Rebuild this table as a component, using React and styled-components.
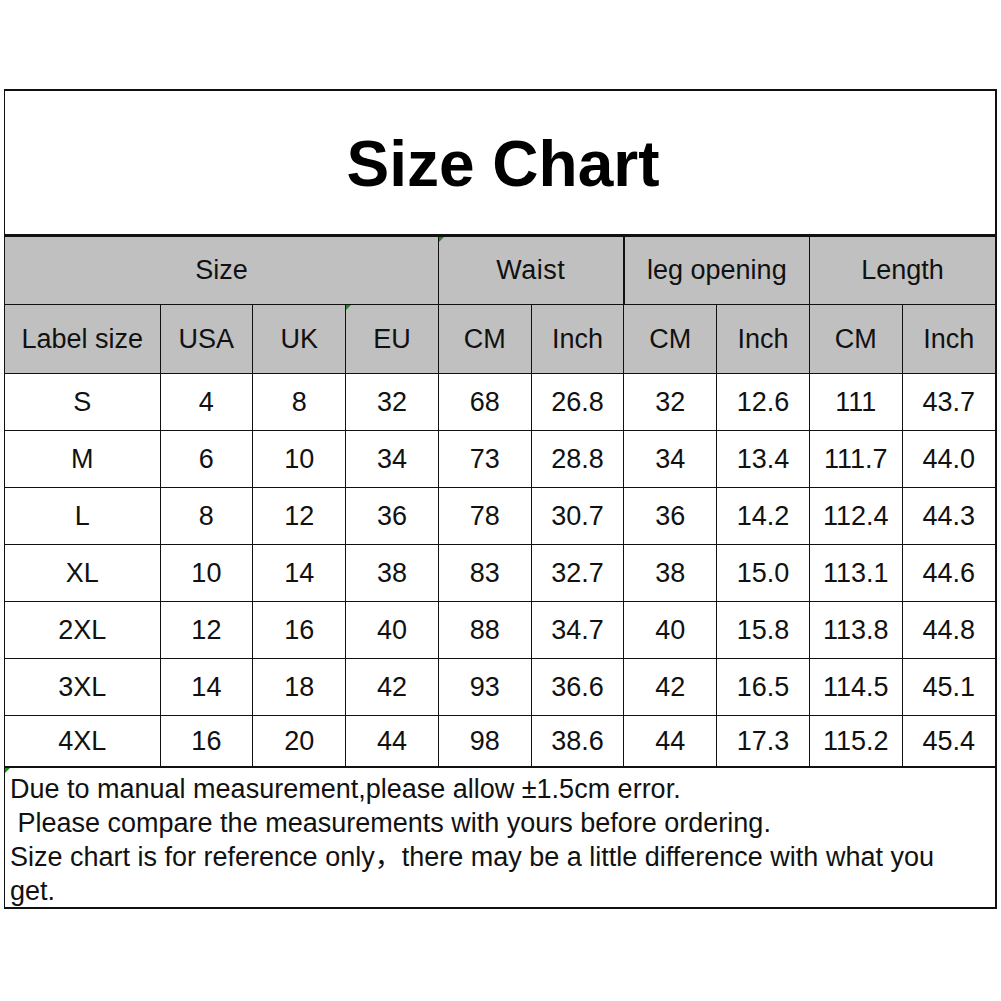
import React from 'react';
import styled, { createGlobalStyle } from 'styled-components';

const GlobalStyle = createGlobalStyle`
  html, body {
    margin: 0;
    padding: 0;
    background: #fff;
  }
  body {
    font-family: "Liberation Sans", Arial, "Noto Sans CJK SC", sans-serif;
    color: #111;
  }
`;

const Page = styled.div`
  width: 1001px;
  height: 1001px;
  padding: 89px 0 0 4px;
  box-sizing: border-box;
`;

const Frame = styled.div`
  width: 993px;
  border: 2px solid #111;
  border-left-width: 1px;
  box-sizing: border-box;
`;

const Title = styled.h1`
  margin: 0;
  height: 145px;
  display: flex;
  align-items: center;
  justify-content: center;
  font-size: 64px;
  font-weight: 700;
  color: #000;
  border-bottom: 2px solid #111;
  padding: 2px 0 0 6px;
  box-sizing: border-box;
`;

const Table = styled.table`
  width: 100%;
  border-collapse: collapse;
  table-layout: fixed;
  font-size: 27px;
`;

const Row = styled.tr`
  height: ${(p) => p.h}px;
`;

const Cell = styled.td`
  position: relative;
  padding: 0;
  text-align: center;
  vertical-align: middle;
  border: 1px solid #111;
  border-right-width: ${(p) => (p.thickRight ? 2 : 1)}px;
  background: ${(p) => (p.head ? '#c0c0c0' : '#fff')};
  letter-spacing: ${(p) => (p.spaced ? '0.5px' : '0')};
  &:first-child {
    border-left: none;
  }
  &:last-child {
    border-right: none;
  }
`;

const Mark = styled.span`
  position: absolute;
  top: 0;
  left: 0;
  width: 0;
  height: 0;
  border-top: 5px solid #1f8a1f;
  border-right: 5px solid transparent;
`;

const Notes = styled.div`
  position: relative;
  border-top: 1px solid #111;
  padding: 4px 6px 2px 5px;
  height: 140px;
  box-sizing: border-box;
  font-size: 27px;
  line-height: 34px;
  color: #111;
`;

const Line = styled.div`
  white-space: pre-wrap;
`;

const rows = [
  ['S', '4', '8', '32', '68', '26.8', '32', '12.6', '111', '43.7'],
  ['M', '6', '10', '34', '73', '28.8', '34', '13.4', '111.7', '44.0'],
  ['L', '8', '12', '36', '78', '30.7', '36', '14.2', '112.4', '44.3'],
  ['XL', '10', '14', '38', '83', '32.7', '38', '15.0', '113.1', '44.6'],
  ['2XL', '12', '16', '40', '88', '34.7', '40', '15.8', '113.8', '44.8'],
  ['3XL', '14', '18', '42', '93', '36.6', '42', '16.5', '114.5', '45.1'],
  ['4XL', '16', '20', '44', '98', '38.6', '44', '17.3', '115.2', '45.4'],
];

const subHeads = ['Label size', 'USA', 'UK', 'EU', 'CM', 'Inch', 'CM', 'Inch', 'CM', 'Inch'];

export default function App() {
  return (
    <Page>
      <GlobalStyle />
      <Frame>
        <Title>Size Chart</Title>
        <Table>
          <colgroup>
            <col style={{ width: 155 }} />
            {Array.from({ length: 9 }).map((_, i) => (
              <col key={i} />
            ))}
          </colgroup>
          <tbody>
            <Row h={68}>
              <Cell head colSpan={4}>Size</Cell>
              <Cell head colSpan={2} thickRight spaced>
                <Mark />
                Waist
              </Cell>
              <Cell head colSpan={2}>leg opening</Cell>
              <Cell head colSpan={2}>Length</Cell>
            </Row>
            <Row h={69}>
              {subHeads.map((t, i) => (
                <Cell head key={i}>
                  {i === 3 && <Mark />}
                  {t}
                </Cell>
              ))}
            </Row>
            {rows.map((r, ri) => (
              <Row h={ri === rows.length - 1 ? 51 : 57} key={ri}>
                {r.map((v, ci) => (
                  <Cell key={ci}>{v}</Cell>
                ))}
              </Row>
            ))}
          </tbody>
        </Table>
        <Notes>
          <Mark />
          <Line>Due to manual measurement,please allow ±1.5cm error.</Line>
          <Line> Please compare the measurements with yours before ordering.</Line>
          <Line>Size chart is for reference only，there may be a little difference with what you</Line>
          <Line>get.</Line>
        </Notes>
      </Frame>
    </Page>
  );
}
